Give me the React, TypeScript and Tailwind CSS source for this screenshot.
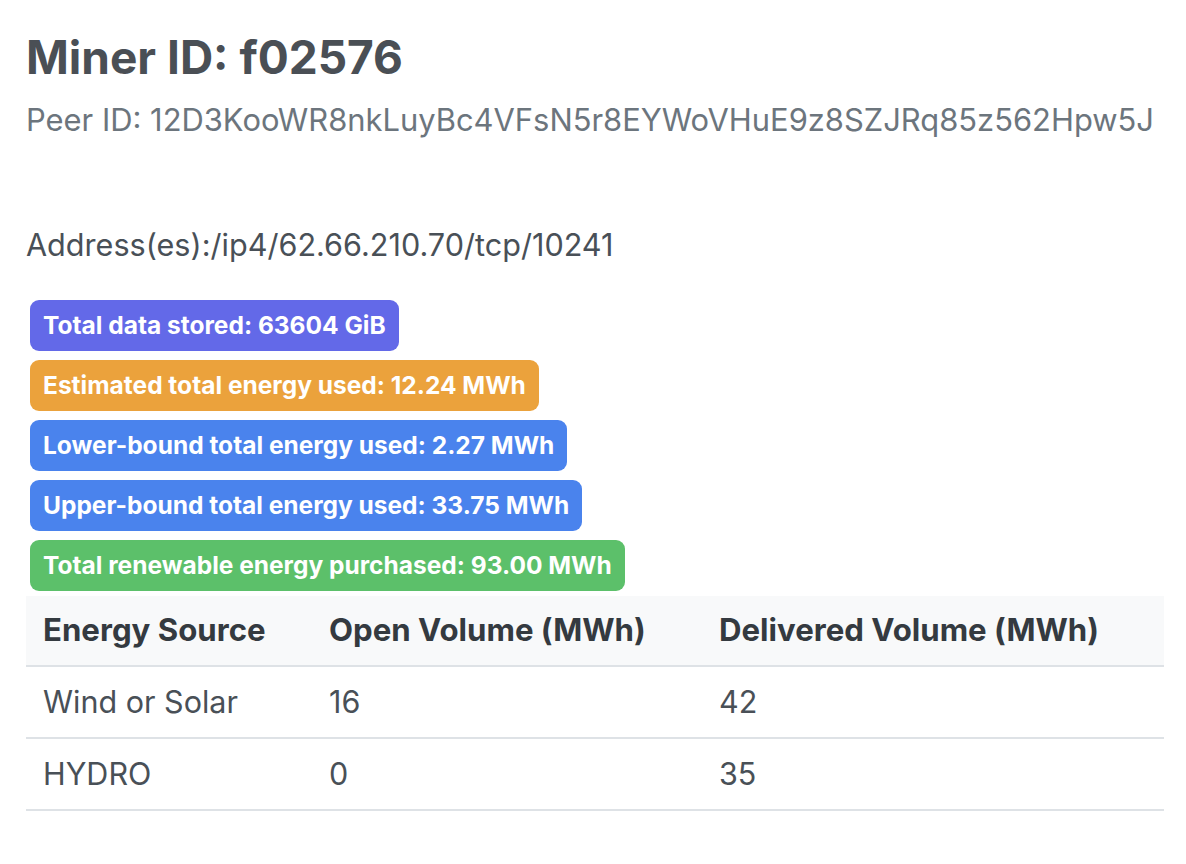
import React from 'react';

const badges = [
  { label: 'Total data stored: 63604 GiB', color: 'bg-[#6369e8]' },
  { label: 'Estimated total energy used: 12.24 MWh', color: 'bg-[#eba23c]' },
  { label: 'Lower-bound total energy used: 2.27 MWh', color: 'bg-[#4a83ed]' },
  { label: 'Upper-bound total energy used: 33.75 MWh', color: 'bg-[#4a83ed]' },
  { label: 'Total renewable energy purchased: 93.00 MWh', color: 'bg-[#5cc06a]' },
];

const rows = [
  { source: 'Wind or Solar', open: '16', delivered: '42' },
  { source: 'HYDRO', open: '0', delivered: '35' },
];

export default function App() {
  return (
    <div className="min-h-screen bg-white pl-[26px] pr-[22px] pt-[29px] font-['Inter','Liberation_Sans',sans-serif]">
      {/* Header */}
      <h2 className="text-[46px] font-bold leading-[56px] text-[#4a4f55]">Miner ID: f02576</h2>
      <p className="text-[30.9px] leading-[40px] text-[#6c757d] mt-[15px]">
        Peer ID: 12D3KooWR8nkLuyBc4VFsN5r8EYWoVHuE9z8SZJRq85z562Hpw5J
      </p>

      <p className="text-[30.6px] leading-[40px] text-[#495057] mt-[85px]">
        Address(es):/ip4/62.66.210.70/tcp/10241
      </p>

      {/* Badges */}
      <div className="flex flex-col items-start gap-[9px] mt-[35px] pl-[4px]">
        {badges.map((b) => (
          <span
            key={b.label}
            className={`${b.color} text-white font-bold text-[24.5px] leading-[51px] h-[51px] px-[13px] rounded-[9px] whitespace-nowrap`}
          >
            {b.label}
          </span>
        ))}
      </div>

      {/* Energy table */}
      <table className="w-[1138px] mt-[5px] table-fixed border-collapse">
        <colgroup>
          <col className="w-[286px]" />
          <col className="w-[390px]" />
          <col />
        </colgroup>
        <thead>
          <tr className="bg-[#f8f9fa] border-b-2 border-[#dee2e6]">
            <th className="text-left font-bold text-[31.2px] text-[#343a40] h-[70px] pl-[17px]">Energy Source</th>
            <th className="text-left font-bold text-[31.2px] text-[#343a40] pl-[17px]">Open Volume (MWh)</th>
            <th className="text-left font-bold text-[31.2px] text-[#343a40] pl-[17px]">Delivered Volume (MWh)</th>
          </tr>
        </thead>
        <tbody>
          {rows.map((r) => (
            <tr key={r.source} className="border-b-2 border-[#dee2e6]">
              <td className="text-[30.5px] text-[#495057] h-[72px] pl-[17px]">{r.source}</td>
              <td className="text-[30.5px] text-[#495057] pl-[17px]">{r.open}</td>
              <td className="text-[30.5px] text-[#495057] pl-[17px]">{r.delivered}</td>
            </tr>
          ))}
        </tbody>
      </table>
    </div>
  );
}
